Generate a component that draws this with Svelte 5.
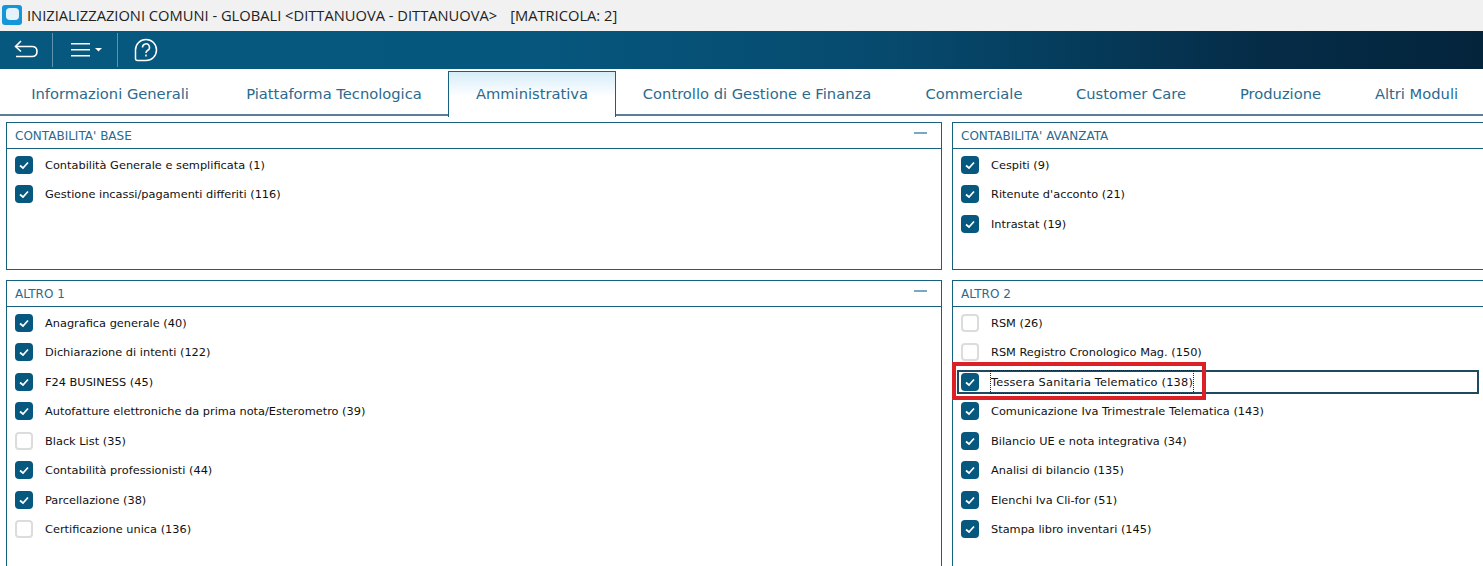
<script>
    const tabs = [
        { label: 'Informazioni Generali', width: 220 },
        { label: 'Piattaforma Tecnologica', width: 228 },
        { label: 'Amministrativa', width: 168, active: true },
        { label: 'Controllo di Gestione e Finanza', width: 282 },
        { label: 'Commerciale', width: 152 },
        { label: 'Customer Care', width: 162 },
        { label: 'Produzione', width: 137 },
        { label: 'Altri Moduli', width: 135 }
    ];

    const panels = [
        {
            title: "CONTABILITA' BASE",
            collapse: true,
            items: [
                ['Contabilità Generale e semplificata (1)', true],
                ['Gestione incassi/pagamenti differiti (116)', true]
            ]
        },
        {
            title: "CONTABILITA' AVANZATA",
            items: [
                ['Cespiti (9)', true],
                ["Ritenute d'acconto (21)", true],
                ['Intrastat (19)', true]
            ]
        },
        {
            title: 'ALTRO 1',
            collapse: true,
            items: [
                ['Anagrafica generale (40)', true],
                ['Dichiarazione di intenti (122)', true],
                ['F24 BUSINESS (45)', true],
                ['Autofatture elettroniche da prima nota/Esterometro (39)', true],
                ['Black List (35)', false],
                ['Contabilità professionisti (44)', true],
                ['Parcellazione (38)', true],
                ['Certificazione unica (136)', false]
            ]
        },
        {
            title: 'ALTRO 2',
            items: [
                ['RSM (26)', false],
                ['RSM Registro Cronologico Mag. (150)', false],
                ['Tessera Sanitaria Telematico (138)', true, true],
                ['Comunicazione Iva Trimestrale Telematica (143)', true],
                ['Bilancio UE e nota integrativa (34)', true],
                ['Analisi di bilancio (135)', true],
                ['Elenchi Iva Cli-for (51)', true],
                ['Stampa libro inventari (145)', true]
            ]
        }
    ];
</script>

<main>
    <div class="titlebar">
        <svg class="logo" viewBox="0 0 20 20" width="20" height="20">
            <rect x="0" y="0" width="20" height="20" rx="3" fill="#1596d8" />
            <rect x="4" y="3" width="13" height="12" rx="4" fill="#e4f3fb" />
        </svg>
        <span>INIZIALIZZAZIONI COMUNI - GLOBALI &lt;DITTANUOVA - DITTANUOVA&gt;</span>
        <span class="matricola">[MATRICOLA: 2]</span>
    </div>

    <div class="toolbar">
        <button class="tool first" aria-label="Indietro">
            <svg viewBox="0 0 26 24" width="26" height="24" fill="none" stroke="#fff" stroke-width="1.6">
                <path d="M8 3 L2.500 8.500 L8 13.500" />
                <path d="M3 8.500 H19 Q24 8.500 24 13.500 Q24 18.500 19 18.500 H3" />
            </svg>
        </button>
        <button class="tool menu" aria-label="Menu">
            <svg viewBox="0 0 32 16" width="32" height="16" fill="#fff">
                <rect x="0" y="1" width="19" height="1.500" />
                <rect x="0" y="7" width="19" height="1.500" />
                <rect x="0" y="13" width="19" height="1.500" />
                <path d="M24 6 H31 L27.500 9.500 Z" />
            </svg>
        </button>
        <button class="tool help" aria-label="Aiuto">
            <svg viewBox="0 0 24 24" width="24" height="24" fill="none" stroke="#fff" stroke-width="1.5">
                <path d="M12 1.500 A10.500 10.500 0 1 1 12 22.500 H3.500 Q1.500 22.500 1.500 20.500 V12 A10.500 10.500 0 0 1 12 1.500 Z" />
                <path d="M8.500 9.500 A3.500 3.500 0 1 1 13.500 12.500 Q12 13.300 12 15" />
                <path d="M12 16.500 V18.500" />
            </svg>
        </button>
    </div>

    <nav class="tabs">
        {#each tabs as tab}
            <div class="tab" class:active={tab.active} style="width: {tab.width}px">{tab.label}</div>
        {/each}
    </nav>

    <div class="panels">
        {#each panels as panel}
            <section class="panel">
                <header>
                    <h2>{panel.title}</h2>
                    {#if panel.collapse}<span class="collapse"></span>{/if}
                </header>
                <div class="items">
                    {#each panel.items as [label, checked, focused]}
                        <div class="item" class:focused>
                            <span class="check" class:checked>
                                {#if checked}
                                    <svg viewBox="0 0 18 18" width="18" height="18" fill="none" stroke="#fff" stroke-width="1.700">
                                        <path d="M5 9.500 L8 12 L13 6.500" />
                                    </svg>
                                {/if}
                            </span>
                            <span class="label">{label}</span>
                            {#if focused}<span class="highlight"></span>{/if}
                        </div>
                    {/each}
                </div>
            </section>
        {/each}
    </div>
</main>

<style>
    :global(body) {
        margin: 0;
        overflow: hidden;
        background: #fff;
    }

    main {
        width: 1483px;
        height: 566px;
        overflow: hidden;
        font-family: "DejaVu Sans", sans-serif;
        color: #111;
    }

    .titlebar {
        height: 31px;
        box-sizing: border-box;
        padding: 0 0 2px 2px;
        display: flex;
        align-items: center;
        gap: 5px;
        background: #f1f1f1;
        font-family: "Open Sans", sans-serif;
        font-size: 14.700px;
        color: #222;
        white-space: nowrap;
    }

    .matricola {
        margin-left: 8px;
    }

    .toolbar {
        height: 38px;
        display: flex;
        align-items: center;
        background: linear-gradient(90deg, #07587f 0%, #06577e 35%, #064a6e 60%, #052c47 85%, #04243c 100%);
    }

    .tool {
        height: 34px;
        padding: 0;
        display: flex;
        align-items: center;
        justify-content: center;
        background: none;
        border: 0;
        border-right: 1px solid #5d93ad;
    }

    .first {
        width: 53px;
    }

    .menu {
        width: 65px;
        padding-left: 4px;
    }

    .help {
        width: 55px;
        border-right: 0;
    }

    .tabs {
        height: 47px;
        display: flex;
        box-sizing: border-box;
        border-bottom: 2px solid #5b7f9b;
        margin-bottom: 1px;
    }

    .tab {
        flex: none;
        box-sizing: border-box;
        height: 47px;
        line-height: 50px;
        text-align: center;
        font-size: 14.700px;
        color: #2b6a8e;
        white-space: nowrap;
    }

    .tab.active {
        height: 46px;
        margin-top: 2px;
        line-height: 44px;
        background: linear-gradient(#d6edf8, #fff 55%);
        border: 1px solid #17607f;
        border-bottom: 0;
    }

    .panels {
        display: grid;
        grid-template-columns: 936px 540px;
        grid-template-rows: 148px 290px;
        gap: 10px;
        padding: 5px 0 0 6px;
    }

    .panel {
        box-sizing: border-box;
        border: 1px solid #17607f;
        min-width: 0;
    }

    header {
        height: 25px;
        display: flex;
        align-items: center;
        justify-content: space-between;
        padding: 0 14px 0 8px;
        border-bottom: 1px solid #17607f;
    }

    h2 {
        margin: 0;
        font-size: 12px;
        font-weight: 400;
        color: #2b6a8e;
    }

    .collapse {
        width: 13px;
        height: 2px;
        margin-bottom: 6px;
        background: #7aa8c0;
    }

    .items {
        padding-top: 1px;
    }

    .item {
        position: relative;
        height: 29.500px;
        display: flex;
        align-items: center;
        padding-left: 8px;
        font-size: 11.350px;
    }

    .check {
        flex: none;
        width: 18px;
        height: 18px;
        box-sizing: border-box;
        margin-right: 12px;
        border: 2px solid #dcdcdc;
        border-radius: 4px;
        background: #fff;
    }

    .check.checked {
        border: 0;
        background: #06587f;
    }

    .check svg {
        display: block;
    }

    .focused::before {
        content: '';
        position: absolute;
        left: 4px;
        right: 12px;
        top: 3px;
        height: 24px;
        border: 2px solid #1d4a60;
        box-sizing: border-box;
    }

    .focused .label {
        position: relative;
        outline: 1px dotted #222;
        padding: 4px 0;
        letter-spacing: 0.200px;
    }

    .focused .check {
        position: relative;
    }

    .highlight {
        position: absolute;
        left: -1px;
        top: -5px;
        width: 254px;
        height: 38px;
        box-sizing: border-box;
        border: 4px solid #dc2126;
    }
</style>
